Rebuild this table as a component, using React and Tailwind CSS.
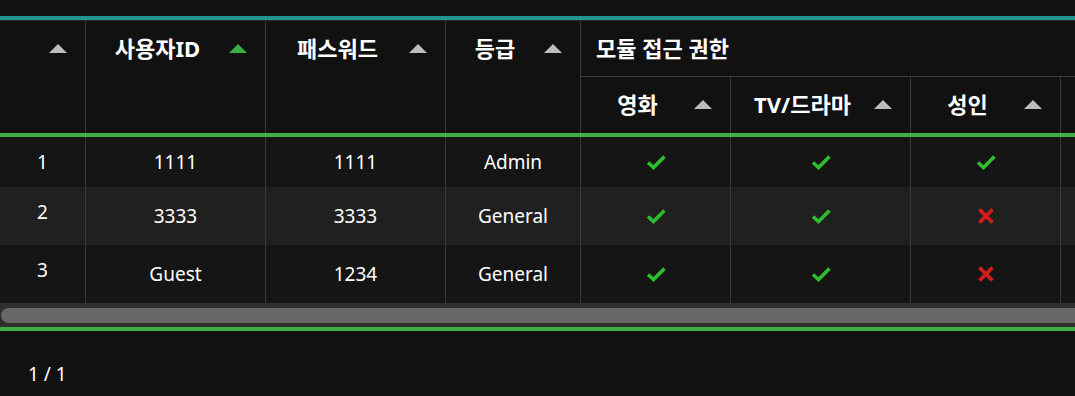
import { Fragment } from 'react'

const GRID = 'grid grid-cols-[86px_180px_180px_135px_150px_180px_150px_180px]'

const rows = [
  { n: 1, id: '1111', pw: '1111', grade: 'Admin', movie: true, tv: true, adult: true, h: 'h-[50px]', bg: 'bg-[#151515]' },
  { n: 2, id: '3333', pw: '3333', grade: 'General', movie: true, tv: true, adult: false, h: 'h-[58px]', bg: 'bg-[#202020]' },
  { n: 3, id: 'Guest', pw: '1234', grade: 'General', movie: true, tv: true, adult: false, h: 'h-[58px]', bg: 'bg-[#151515]' },
]

function SortIcon({ active }) {
  return (
    <svg width="18" height="9" viewBox="0 0 18 9" className="shrink-0">
      <polygon points="9,0 18,9 0,9" fill={active ? '#3fae46' : '#bdbdbd'} />
    </svg>
  )
}

function HeadCell({ label, active }) {
  return (
    <div className="flex items-center h-[55px] pr-[18px]">
      <span className="flex-1 text-center">{label}</span>
      <SortIcon active={active} />
    </div>
  )
}

function Check() {
  return (
    <svg width="20" height="16" viewBox="0 0 20 16">
      <path d="M2 8.5 L7.5 13.5 L18.5 2.5" fill="none" stroke="#2ebd2e" strokeWidth="3.6" />
    </svg>
  )
}

function Cross() {
  return (
    <svg width="18" height="16" viewBox="0 0 18 16">
      <path d="M2.5 1.5 L15.5 14.5 M15.5 1.5 L2.5 14.5" fill="none" stroke="#d41c1c" strokeWidth="3.8" />
    </svg>
  )
}

export default function App() {
  const cell = 'flex items-center justify-center border-r border-[#3a3a3a]'
  return (
    <div
      className="w-[1075px] h-[396px] overflow-hidden bg-[#111111] text-white flex flex-col"
      style={{ fontFamily: '"Noto Sans", "Noto Sans CJK KR", sans-serif' }}
    >
      <div className="h-4 bg-[#111214] shrink-0" />
      <div className="h-1 bg-[#20958f] shrink-0" />
      <div className="h-px bg-[#2b2b2b] shrink-0" />

      {/* Header */}
      <div className={`${GRID} grid-rows-[56px_56px] bg-[#111111] border-b-4 border-[#3fae46] text-[22px] font-bold shrink-0`}>
        <div className="row-span-2 border-r border-[#3a3a3a]"><HeadCell /></div>
        <div className="row-span-2 border-r border-[#3a3a3a]"><HeadCell label="사용자ID" active /></div>
        <div className="row-span-2 border-r border-[#3a3a3a]"><HeadCell label="패스워드" /></div>
        <div className="row-span-2 border-r border-[#3a3a3a]"><HeadCell label="등급" /></div>
        <div className="col-span-4 flex items-center pl-[15px] border-b border-[#3a3a3a]">모듈 접근 권한</div>
        <div className="border-r border-[#3a3a3a]"><HeadCell label="영화" /></div>
        <div className="border-r border-[#3a3a3a]"><HeadCell label="TV/드라마" /></div>
        <div className="border-r border-[#3a3a3a]"><HeadCell label="성인" /></div>
        <div />
      </div>

      {/* Body */}
      <div className="text-[19px] shrink-0">
        {rows.map((r) => (
          <div key={r.n} className={`${GRID} ${r.h} ${r.bg}`}>
            <div className="border-r border-[#3a3a3a]">
              <div className="h-[50px] flex items-center justify-center">{r.n}</div>
            </div>
            <div className={cell}>{r.id}</div>
            <div className={cell}>{r.pw}</div>
            <div className={cell}>{r.grade}</div>
            <div className={cell}>{r.movie ? <Check /> : <Cross />}</div>
            <div className={cell}>{r.tv ? <Check /> : <Cross />}</div>
            <div className={cell}>{r.adult ? <Check /> : <Cross />}</div>
            <Fragment><div /></Fragment>
          </div>
        ))}
      </div>

      {/* Scrollbar */}
      <div className="h-6 bg-[#2f2f2f] pt-[5px] pl-px shrink-0">
        <div className="h-[15px] rounded-l-full bg-[#686868]" />
      </div>
      <div className="h-1 bg-[#3fae46] shrink-0" />

      {/* Footer */}
      <div className="flex-1 pl-7 pt-[30px] text-[19px] leading-[26px]">1 / 1</div>
    </div>
  )
}
